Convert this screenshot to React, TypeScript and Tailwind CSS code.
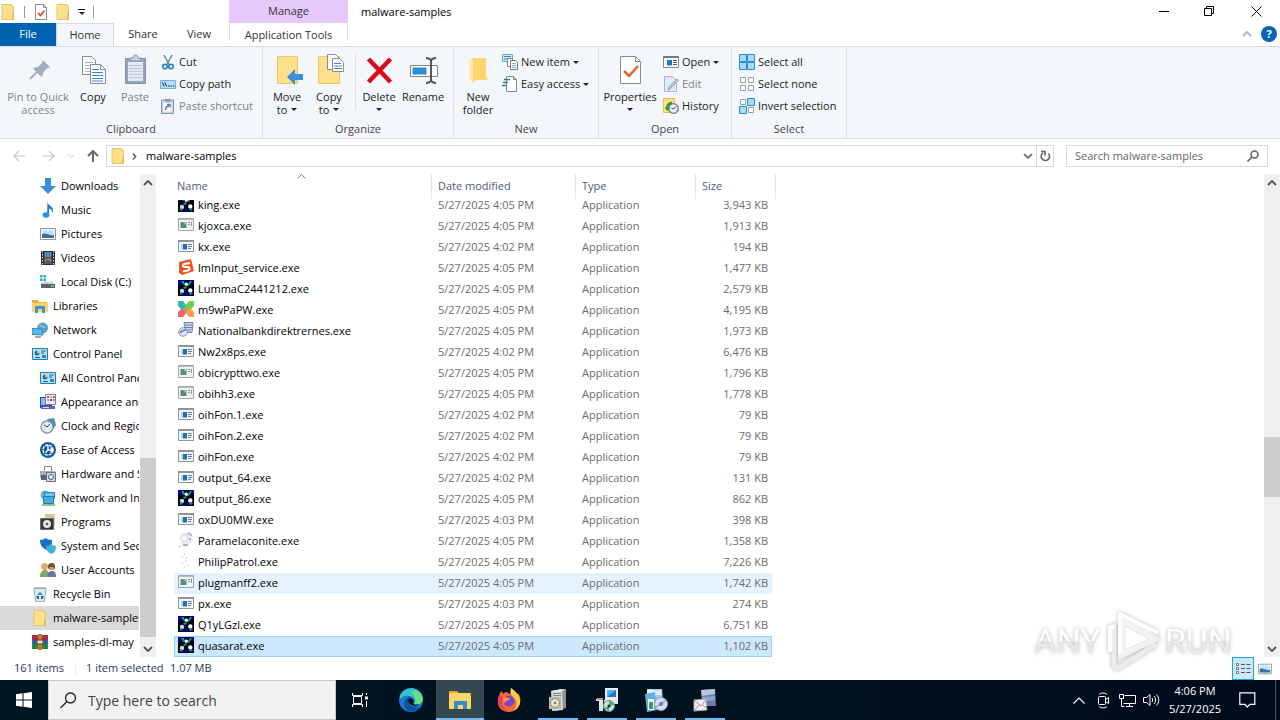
import React from 'react';
import clsx from 'clsx';

type IconProps = { name: string; size?: number };

const glyphs: Record<string, React.ReactNode> = {
  folder: (
    <>
      <path d="M2 .5h10v2h1.500v13H2z" fill="#ffe08a" stroke="#e9c465" />
      <path d="M12 9v6.500h2V9z" fill="#e8bd55" />
    </>
  ),
  check: (
    <>
      <path d="M2.500.5h8l3 3v12h-11z" fill="#fff" stroke="#8a8a8a" />
      <path d="M10.500.5v3h3" fill="none" stroke="#8a8a8a" />
      <path d="M5 9l2.500 2.500L11.500 6.500" fill="none" stroke="#d9532c" strokeWidth="1.800" />
    </>
  ),
  cut: (
    <>
      <path d="M4 1l5 9.500M12 1L7 10.500" stroke="#6f8496" strokeWidth="1.500" fill="none" />
      <circle cx="5" cy="12.500" r="2.300" fill="#d6ecfa" stroke="#2480bd" strokeWidth="1.500" />
      <circle cx="11" cy="12.500" r="2.300" fill="#d6ecfa" stroke="#2480bd" strokeWidth="1.500" />
    </>
  ),
  copyPath: (
    <>
      <path d="M.5 4.500h15v8H.5z" fill="#b9e0fa" stroke="#69b4e4" />
      <path d="M2.500 6.500l1.500 4M5 6.500l1.500 4" stroke="#123" fill="none" />
      <path d="M8 10h1.500M10.500 10H12M13 10h1.500" stroke="#123" />
    </>
  ),
  pasteShortcut: (
    <>
      <path d="M1.500 2h12v13.500h-12z" fill="#c9d3e6" stroke="#8594b5" />
      <path d="M5 .8h5v2.700H5z" fill="#8594b5" />
      <path d="M3.500 5h8v8.500h-8z" fill="#fff" />
      <path d="M5.500 12c0-3 1-4 3.500-4M7 6.500h3v3" fill="none" stroke="#5d78ad" strokeWidth="1.500" />
    </>
  ),
  newItem: (
    <>
      <path d="M.5.500h10v7H.5z" fill="#cde9fb" stroke="#6aa7cf" />
      <path d="M2 2.500h7M2 5h3" stroke="#3a87c0" />
      <path d="M5.500 4.500h5v8h-5z" fill="#fff" stroke="#888" />
      <path d="M8.500 6.500h5l2 2v7h-7z" fill="#fff" stroke="#777" />
      <path d="M10 9.500h4M10 11.500h4M10 13.500h4" stroke="#8aa9c5" />
    </>
  ),
  easyAccess: (
    <>
      <path d="M4.500.5h7l3 3v12h-10z" fill="#fff" stroke="#888" />
      <path d="M11.500.5v3h3" fill="none" stroke="#888" />
      <path d="M2 3.500h6M1 6.500h5M0 9.500h4" stroke="#2c77b0" strokeWidth="1.300" />
    </>
  ),
  open: (
    <>
      <path d="M.5 2.500h15v11H.5z" fill="#fff" stroke="#888" />
      <path d="M.5 3h15" stroke="#777" strokeWidth="2" />
      <path d="M4 6h5v5.500H4z" fill="#1679c5" />
      <path d="M10 6.500h4M10 8.500h4M10 10.500h4" stroke="#456" />
    </>
  ),
  edit: (
    <>
      <path d="M1.500.500h8l4 4v11h-12z" fill="#e4eaf5" stroke="#a9b5ce" />
      <path d="M5 14l1-3 8-8 1.500 1.500-8 8z" fill="#b7c6e2" stroke="#93a5c9" />
    </>
  ),
  history: (
    <>
      <path d="M.5.5h11v14H.5z" fill="#ffe08a" stroke="#e6bf59" />
      <circle cx="10.500" cy="10.500" r="4.800" fill="#e9eef2" stroke="#6c7880" strokeWidth="1.300" />
      <path d="M10.500 11l2.500-2.500M10.500 11l-2-1" fill="none" stroke="#445" />
      <path d="M9 5C5.500 5 4 7.500 4.500 10" fill="none" stroke="#28a028" strokeWidth="2.500" />
      <path d="M1.500 9.500h6L4.500 13z" fill="#28a028" />
    </>
  ),
  selectAll: (
    <path d="M.5.5h7v7h-7zM8.500.5h7v7h-7zM.5 8.500h7v7h-7zM8.500 8.500h7v7h-7z" fill="#a5dbfb" stroke="#2b8ad0" />
  ),
  selectNone: (
    <path d="M1.500 1.500h5v5h-5zM9.500 1.500h5v5h-5zM1.500 9.500h5v5h-5zM9.500 9.500h5v5h-5z" fill="#fff" stroke="#a0a0a0" />
  ),
  invert: (
    <>
      <path d="M1.500 1.500h5v5h-5zM9.500 9.500h5v5h-5z" fill="#fff" stroke="#8fa0ac" />
      <path d="M8.500.5h7v7h-7zM.5 8.500h7v7h-7z" fill="#a5dbfb" stroke="#2b8ad0" />
    </>
  ),
  downloads: <path d="M5 0h6v8h5l-8 8-8-8h5z" fill="#3c8fda" />,
  music: (
    <>
      <path d="M7.500 0c.5 3.500 5.500 4 5.500 8 0 1-.5 2.200-1 3 .3-3-1.500-4-3-4.500V13h-2z" fill="#1e7fd2" />
      <ellipse cx="6" cy="13" rx="3.500" ry="2.700" fill="#2b93e8" />
    </>
  ),
  pictures: (
    <>
      <path d="M.5 2.500h15v11H.5z" fill="#fff" stroke="#8d959c" />
      <path d="M2 4h12v8H2z" fill="#bfe3fa" />
      <path d="M2 8c4-2 7 2 12 1v3H2z" fill="#3b6f94" />
    </>
  ),
  videos: (
    <>
      <path d="M1 1h14v14H1z" fill="#2d2d2d" />
      <path d="M2.500 1v14M13.500 1v14" stroke="#ddd" strokeDasharray="1.500 1.500" />
      <path d="M4.500 2h7v5.500h-7z" fill="#5c80ba" />
      <path d="M4.500 8.500h7V14h-7z" fill="#a78a50" />
      <path d="M4.500 12l3-2.500 4 3V14h-7z" fill="#465d7c" />
    </>
  ),
  disk: (
    <>
      <path d="M0 1h2.500v2.500H0zM3.500 1H6v2.500H3.500zM0 4.500h2.500V7H0zM3.500 4.500H6V7H3.500z" fill="#17b3c9" />
      <path d="M3 7.500h9l3 2.500H1z" fill="#cfd4d6" />
      <path d="M1 10h14v4H1z" fill="#5b6468" />
      <path d="M11 12h3" stroke="#50e36b" strokeWidth="1.500" />
    </>
  ),
  libraries: (
    <>
      <path d="M0 2h6l1 2h8v10H0z" fill="#eab543" />
      <path d="M0 5h16v9H0z" fill="#fbd367" />
      <path d="M3 8h10v7h-3v-4H6v4H3z" fill="#3e96d6" />
    </>
  ),
  network: (
    <>
      <circle cx="10.500" cy="6" r="5.500" fill="#5c9fc2" />
      <path d="M7 3c3 0 3 3 6 2" stroke="#b4dded" fill="none" />
      <path d="M0 6.500l10 .5 1 6-11-.5z" fill="#59b8ec" stroke="#3385b8" />
      <path d="M3 15h6" stroke="#7b8d99" strokeWidth="1.500" />
    </>
  ),
  control: (
    <>
      <path d="M.5 2.500h15v11H.5z" fill="#b5e3fb" stroke="#1d7fb7" />
      <circle cx="5" cy="7" r="2.500" fill="#2470a5" />
      <path d="M5 7V4.500A2.500 2.500 0 017.500 7z" fill="#f5cb61" />
      <path d="M9 5h5M9 7h3M3 11.500h5" stroke="#1f5c87" />
      <path d="M10 9h4v3h-4z" fill="#2f8ec8" />
    </>
  ),
  appearance: (
    <>
      <path d="M0 3h12v11H0z" fill="#3049b8" />
      <path d="M1 4h9v7H1z" fill="#8fb7ee" />
      <path d="M5.500.500h10v10h-10z" fill="#f2f0ff" stroke="#7c7ca0" />
      <path d="M7 2h2v2H7zM13 5h1.500v2H13z" fill="#d44" />
      <path d="M10 2h2v2h-2zM7 5h2v2H7z" fill="#e8a52b" />
      <path d="M13 2h1.500v2H13zM10 5h2v2h-2z" fill="#4355b8" />
      <path d="M1 12h14v3H1z" fill="#5762c4" />
      <path d="M3 13.500h6" stroke="#dfe4ff" />
    </>
  ),
  clock: (
    <>
      <path d="M7 1l7-1 2 7-5 7z" fill="#4d91b9" />
      <circle cx="7" cy="9" r="6" fill="#e4edf3" stroke="#7d96a6" strokeWidth="1.300" />
      <path d="M7 9l3-3M4 7l3 2" stroke="#345" fill="none" />
    </>
  ),
  ease: (
    <>
      <circle cx="8" cy="8" r="8" fill="#165e9c" />
      <circle cx="8" cy="8" r="5" fill="none" stroke="#fff" strokeWidth="1.300" strokeDasharray="3 1" />
      <path d="M8 3v5h5M8 8l-2.500 2.500M10.500 5.500L13 8l-2.500 2.500" stroke="#fff" strokeWidth="1.300" fill="none" />
    </>
  ),
  hardware: (
    <>
      <path d="M4.500.500h7v5h-7z" fill="#fff" stroke="#888" />
      <path d="M0 5h15v7H0z" fill="#a7aeb6" />
      <path d="M1 9h5v5H1z" fill="#5e6475" />
      <path d="M6.500 6.500h9v9h-9z" fill="#d2dae0" stroke="#66717a" />
      <circle cx="11" cy="11" r="2.500" fill="#f4f4f4" stroke="#4c5c68" />
    </>
  ),
  netInternet: (
    <>
      <circle cx="5" cy="5" r="4.500" fill="#63b7dd" />
      <path d="M4.500 2.500h10v6h-10z" fill="#6dc4ef" stroke="#237eae" />
      <path d="M3.500 6.500h10v7h-10z" fill="#4aabdd" stroke="#237eae" />
      <path d="M2 15h13" stroke="#62bd5a" strokeWidth="1.500" />
    </>
  ),
  programs: (
    <>
      <path d="M5 0h10v12H5z" fill="#d9c69b" />
      <path d="M.5 4.500h13v11H.5z" fill="#353535" stroke="#6c6c6c" />
      <circle cx="7" cy="10" r="4" fill="#e4e4e4" />
      <circle cx="7" cy="10" r="1.300" fill="#555" />
    </>
  ),
  security: (
    <>
      <path d="M0 2c3 0 4-1 5-2 2 1 4 2 7 2 0 5-1 8-5 10C2 10 0 7 0 2z" fill="#1672c0" />
      <path d="M6 8c3 0 4-1 5-2 1 1 3 2 5 2 0 4-1 6-4 8-4-1-6-4-6-8z" fill="#43aee0" />
    </>
  ),
  users: (
    <>
      <circle cx="4.500" cy="4.500" r="3.500" fill="#d8b06c" />
      <path d="M0 15c0-5 2-7 5-7s4 2 4 7z" fill="#7aa86d" />
      <circle cx="11.500" cy="4.500" r="3.500" fill="#6e4f37" />
      <path d="M9.500 5h4v3h-4z" fill="#cf9f7a" />
      <path d="M7 15c0-4 2-6 5-6s4 2 4 6z" fill="#65799a" />
    </>
  ),
  recycle: (
    <>
      <path d="M2 2.500h12l-1.500 13h-9z" fill="#e3ebf0" stroke="#a0abb2" />
      <path d="M1.500 2h13" stroke="#8c989f" />
      <path d="M5 9l3-3 3 3h-2l-1-1-1 1zM5 13l-1-3h3v3zM11 13l1-3H9v3z" fill="#1e79c4" />
    </>
  ),
  winrar: (
    <>
      <path d="M0 1h16v5H0z" fill="#b0304c" />
      <path d="M0 6h16v4H0z" fill="#3a62b8" />
      <path d="M0 10h16v5H0z" fill="#2f8c42" />
      <path d="M6 0h4v16H6z" fill="#b67a34" />
      <path d="M5 6h6v4H5z" fill="#e9e2c8" stroke="#6a4321" />
      <path d="M2.500 1v14M13.500 1v14" stroke="#222" strokeOpacity=".35" />
    </>
  ),
  exe: (
    <>
      <path d="M.5 2.500h15v11H.5z" fill="#f7f9fa" stroke="#8f9498" />
      <path d="M0 3h16" stroke="#8f9498" strokeWidth="2" />
      <path d="M5 6h4v5.500H5z" fill="#1d70b8" />
      <path d="M3 6h2v5.500H3z" fill="#b5d6ee" />
      <path d="M10 6.500h4M10 8.500h4M10 10.500h3" stroke="#5b7f9c" />
    </>
  ),
  exeOld: (
    <>
      <path d="M.5 1.500h15v12H.5z" fill="#f3f5f5" stroke="#a0a5a8" />
      <path d="M1 2.500h14" stroke="#b9bec2" />
      <path d="M2.500 5h6v6h-6z" fill="#598c7e" />
      <path d="M5 5h3.500v3.500z" fill="#a2c6bd" />
      <path d="M10 5.500h2M10 7.500h2M13.500 5v4" stroke="#8a9290" />
    </>
  ),
  crystal: (
    <>
      <path d="M0 0h16v16H0z" fill="#00004f" />
      <path d="M0 0h3v5H0zM13 0h3v6h-3zM5 12h5v4H5z" fill="#0000a8" />
      <path d="M3 1h5v6L4 9 0 12V7l3-2zM10 1h3l3 4v2l-5 1-3-2zM8 9l4-1 4 2v5l-4 1-4-4zM0 12l3-3 4 1v4l-4 2H0z" fill="#000" />
      <path d="M3 1h3l1 3-2 1zM12 1h2l-3 5-2-1z" fill="#1494a0" />
      <circle cx="8.300" cy="4.300" r="1.700" fill="#e8ffff" />
      <circle cx="4" cy="11" r="2.200" fill="#c8dcdc" />
      <circle cx="12.300" cy="10.500" r="2.200" fill="#fff" />
      <path d="M1 14l3-2 1 2-2 1zM11 13l3-1 1 2-3 1zM5 7l3-1 1 2-3 1z" fill="#17867f" />
    </>
  ),
  sogou: (
    <>
      <path d="M1 3l12-3 3 12-12 4-3-2z" fill="#f1501f" />
      <path d="M12 4L6 5c-2 1-1 3 1 3l3 .2c2 .3 2 2.600 0 3.300L5 12.500" fill="none" stroke="#fff" strokeWidth="2.200" />
    </>
  ),
  clover: (
    <>
      <path d="M0 0h5l3 4v4H3L0 5z" fill="#31b7b4" />
      <path d="M11 0h5v5l-3 3H8V4z" fill="#6fd34a" />
      <path d="M0 11l3-3h5v4l-3 4H0z" fill="#f66471" />
      <path d="M8 8h5l3 3v5h-5l-3-4z" fill="#fba043" />
      <path d="M8 5l3 3-3 3-3-3z" fill="#b8a168" />
    </>
  ),
  database: (
    <>
      <path d="M6 .5h9l-1 10H7z" fill="#ccd5ea" stroke="#7583aa" />
      <path d="M7 3h7M7 5.500h7M7 8h6" stroke="#6c7fb5" />
      <circle cx="5" cy="10" r="4.300" fill="#dfe5f4" stroke="#8e9ac0" />
      <path d="M2 11c2-3 4-3 6-3" fill="none" stroke="#6980bb" strokeWidth="1.500" />
    </>
  ),
  disc: (
    <>
      <path d="M5 1l7-1 3 3-1 8-6 4-5-2 1-5z" fill="#e9ecf0" />
      <circle cx="6" cy="6" r="3.500" fill="#f5f7f9" stroke="#ccd3da" />
      <path d="M9 2l3-1M11 7h2M5 13h5" stroke="#8fa2b6" strokeWidth="1.300" />
      <path d="M12 3h1.500" stroke="#3d6287" />
      <path d="M1 14h1v1H1z" fill="#777" />
    </>
  ),
  dots: <path d="M6 1h1M4 4h1M8 5h1M7 8h1M4 10h1M9 12h1M6 14h1" stroke="#b5b5b5" />,
  viewDetails: (
    <>
      <path d="M1.500 2.500h2v2h-2zM1.500 6.500h2v2h-2zM1.500 10.500h2v2h-2z" fill="#fff" stroke="#777" />
      <path d="M6 3.500h4M11.500 3.500h4M6 7.500h4M11.500 7.500h4M6 11.500h4M11.500 11.500h4" stroke="#555" />
    </>
  ),
};

const Icon = ({ name, size = 16 }: IconProps) => (
  <svg width={size} height={size} viewBox="0 0 16 16" className="shrink-0" aria-hidden="true">
    {glyphs[name]}
  </svg>
);

const bigGlyphs: Record<string, React.ReactNode> = {
  pin: (
    <>
      <path d="M21 6l7 7-2 1-1 .5-4 4c0 2 0 3-1.500 4.500L11 14.500c1.500-1.500 3-1.500 5-1.500l4-4z" fill="#a4adbb" />
      <path d="M15 18l-7 7" stroke="#a4adbb" strokeWidth="2" />
    </>
  ),
  copy: (
    <>
      <path d="M5.500 2.500h9l4 4v14h-13z" fill="#fff" stroke="#8b8b8b" />
      <path d="M8 8.500h8M8 11.500h8M8 14.500h8M8 17.500h8" stroke="#8fb8e4" />
      <path d="M13.500 10.500h10l5 5v14h-15z" fill="#fff" stroke="#8b8b8b" />
      <path d="M23.500 10.500v5h5" fill="none" stroke="#8b8b8b" />
      <path d="M15 15.500h7M15 18.500h11M15 21.500h11M15 24.500h11M15 27h11" stroke="#3f86d0" />
    </>
  ),
  paste: (
    <>
      <path d="M6.500 4.500h20v25h-20z" fill="#98a3bd" stroke="#8390ad" />
      <path d="M9 8h15v19H9z" fill="#e3e9f5" />
      <path d="M10 11.500h13M10 14.500h13M10 17.500h13M10 20.500h13M10 23.500h13" stroke="#bcc7dd" />
      <path d="M11 7V4h3c0-4 5-4 5 0h3v3z" fill="#c8cfde" stroke="#8390ad" />
    </>
  ),
  moveTo: (
    <>
      <path d="M6.500 2.500h20v27h-20z" fill="#fee08b" stroke="#ecc766" />
      <path d="M32 20v6h-8v5l-8-8 8-8v5z" fill="#3b8fd8" />
    </>
  ),
  copyTo: (
    <>
      <path d="M5.500 2.500h21v27h-21z" fill="#fee08b" stroke="#ecc766" />
      <path d="M14.500.5h8l4 4v11h-12z" fill="#fff" stroke="#8b8b8b" />
      <path d="M19.500 4.500h7l4 4v9h-11z" fill="#fff" stroke="#8b8b8b" />
      <path d="M21 9.500h7M21 12h8M21 14.500h8" stroke="#3f86d0" />
    </>
  ),
  del: <path d="M5.500 5l22 23M27.500 5l-22 23" stroke="#d90a1e" strokeWidth="4.500" fill="none" />,
  rename: (
    <>
      <path d="M3.500 11.500h27v11h-27z" fill="#fff" stroke="#858585" />
      <path d="M5.500 13.500h14v7h-14z" fill="#2e8fd9" />
      <path d="M19 4c3 0 4 1 5 2 1-1 2-2 5-2M19 29c3 0 4-1 5-2 1 1 2 2 5 2M24 6v21" fill="none" stroke="#555" strokeWidth="2" />
    </>
  ),
  newFolder: (
    <>
      <path d="M7 5h16v21H7z" fill="#ffe9a6" />
      <path d="M10 4h14v17l2 5H14l-4 3z" fill="#fbd571" />
      <path d="M7 5l4 1v23l-4-4z" fill="#ffe6b3" />
    </>
  ),
  properties: (
    <>
      <path d="M6.500 2.500h15l5 5v22h-20z" fill="#fff" stroke="#8b8b8b" />
      <path d="M21.500 2.500v5h5" fill="none" stroke="#8b8b8b" />
      <path d="M10 17l5 5 9-10" fill="none" stroke="#e8622b" strokeWidth="2.500" />
    </>
  ),
};

const Caret = () => (
  <svg width="6" height="3" viewBox="0 0 6 3" className="inline-block shrink-0" aria-hidden="true">
    <path d="M0 0h6L3 3z" fill="#222" />
  </svg>
);

type BigProps = { icon: string; lines: string[]; width: string; caret?: boolean; disabled?: boolean };

const BigButton = ({ icon, lines, width, caret, disabled }: BigProps) => (
  <button
    disabled={disabled}
    className={clsx('flex shrink-0 flex-col items-center pt-1 leading-[13px]', width, disabled && 'text-[#7d8187]')}
  >
    <svg width="32" height="32" viewBox="0 0 32 32" className="mb-1 shrink-0" aria-hidden="true">
      {bigGlyphs[icon]}
    </svg>
    <span className="whitespace-nowrap">{lines[0]}</span>
    <span className="flex h-[13px] items-center gap-1 whitespace-nowrap">
      {lines[1]}
      {caret && <Caret />}
    </span>
  </button>
);

type SmallProps = { icon: string; label: string; caret?: boolean; disabled?: boolean };

const SmallButton = ({ icon, label, caret, disabled }: SmallProps) => (
  <button
    disabled={disabled}
    className={clsx('flex h-[22px] items-center gap-[3px] whitespace-nowrap', disabled && 'text-[#7d8187]')}
  >
    <Icon name={icon} />
    <span>{label}</span>
    {caret && <Caret />}
  </button>
);

const Group = ({ label, width, children }: { label: string; width: string; children: React.ReactNode }) => (
  <section aria-label={label} className={clsx('flex shrink-0 flex-col border-r border-[#dfe1e4] pt-[3px]', width)}>
    <div className="flex h-[70px]">{children}</div>
    <div className="pt-px text-center leading-4 text-[#444]">{label}</div>
  </section>
);

const Chevron = ({ dir, color = '#555' }: { dir: 'up' | 'down'; color?: string }) => (
  <svg width="10" height="6" viewBox="0 0 10 6" aria-hidden="true">
    <path d={dir === 'up' ? 'M1 5l4-4 4 4' : 'M1 1l4 4 4-4'} fill="none" stroke={color} strokeWidth="1.800" />
  </svg>
);

const ScrollBar = ({ before, thumb }: { before: string; thumb: string }) => (
  <div className="flex w-4 shrink-0 flex-col bg-[#f0f0f0]">
    <button aria-label="Scroll up" className="flex h-[18px] items-center justify-center">
      <Chevron dir="up" />
    </button>
    <div className="flex grow flex-col">
      <div className={before} />
      <div className={clsx('bg-[#cdcdcd]', thumb)} />
    </div>
    <button aria-label="Scroll down" className="flex h-[17px] items-center justify-center">
      <Chevron dir="down" />
    </button>
  </div>
);

const places = [
  { icon: 'downloads', label: 'Downloads', deep: true },
  { icon: 'music', label: 'Music', deep: true },
  { icon: 'pictures', label: 'Pictures', deep: true },
  { icon: 'videos', label: 'Videos', deep: true },
  { icon: 'disk', label: 'Local Disk (C:)', deep: true },
  { icon: 'libraries', label: 'Libraries' },
  { icon: 'network', label: 'Network' },
  { icon: 'control', label: 'Control Panel' },
  { icon: 'control', label: 'All Control Panel Items', deep: true },
  { icon: 'appearance', label: 'Appearance and Personalization', deep: true },
  { icon: 'clock', label: 'Clock and Region', deep: true },
  { icon: 'ease', label: 'Ease of Access', deep: true },
  { icon: 'hardware', label: 'Hardware and Sound', deep: true },
  { icon: 'netInternet', label: 'Network and Internet', deep: true },
  { icon: 'programs', label: 'Programs', deep: true },
  { icon: 'security', label: 'System and Security', deep: true },
  { icon: 'users', label: 'User Accounts', deep: true },
  { icon: 'recycle', label: 'Recycle Bin' },
  { icon: 'folder', label: 'malware-samples', active: true },
  { icon: 'winrar', label: 'samples-dl-may' },
];

const files = [
  ['crystal', 'king.exe', '4:05', '3,943'],
  ['exeOld', 'kjoxca.exe', '4:05', '1,913'],
  ['exe', 'kx.exe', '4:02', '194'],
  ['sogou', 'lmInput_service.exe', '4:05', '1,477'],
  ['crystal', 'LummaC2441212.exe', '4:05', '2,579'],
  ['clover', 'm9wPaPW.exe', '4:05', '4,195'],
  ['database', 'Nationalbankdirektrernes.exe', '4:05', '1,973'],
  ['exe', 'Nw2x8ps.exe', '4:02', '6,476'],
  ['exeOld', 'obicrypttwo.exe', '4:05', '1,796'],
  ['exeOld', 'obihh3.exe', '4:05', '1,778'],
  ['exe', 'oihFon.1.exe', '4:02', '79'],
  ['exe', 'oihFon.2.exe', '4:02', '79'],
  ['exe', 'oihFon.exe', '4:02', '79'],
  ['exe', 'output_64.exe', '4:02', '131'],
  ['crystal', 'output_86.exe', '4:05', '862'],
  ['exe', 'oxDU0MW.exe', '4:03', '398'],
  ['disc', 'Paramelaconite.exe', '4:05', '1,358'],
  ['dots', 'PhilipPatrol.exe', '4:05', '7,226'],
  ['exeOld', 'plugmanff2.exe', '4:05', '1,742'],
  ['exe', 'px.exe', '4:03', '274'],
  ['crystal', 'Q1yLGzl.exe', '4:05', '6,751'],
  ['crystal', 'quasarat.exe', '4:05', '1,102'],
];

const TitleBar = () => (
  <header className="flex h-[46px] shrink-0">
    <div className="flex w-[229px] flex-col">
      <div className="flex h-[23px] items-center">
        <Icon name="folder" />
        <span className="mx-2 h-3 w-px bg-[#999]" />
        <Icon name="check" />
        <span className="ml-[6px] flex">
          <Icon name="folder" />
        </span>
        <button aria-label="Customize Quick Access Toolbar" className="ml-[7px] flex flex-col items-center gap-[2px]">
          <span className="h-px w-[7px] bg-black" />
          <Caret />
        </button>
        <span className="ml-2 h-3 w-px bg-[#999]" />
      </div>
      <nav className="flex h-[23px] items-stretch text-[#333]">
        <button className="w-14 bg-[#0063b1] text-white">File</button>
        <button className="-mb-px w-[58px] border border-b-0 border-[#dadbdc] bg-[#f4f7fa]">Home</button>
        <button className="w-[58px]">Share</button>
        <button className="w-[54px]">View</button>
      </nav>
    </div>
    <div className="flex w-[119px] flex-col text-center text-[#333]">
      <div className="h-[23px] bg-[#e8c9fd] leading-[21px]">Manage</div>
      <button className="h-[18px] border-x border-[#dedede] pt-[5px] leading-[13px]">Application Tools</button>
    </div>
    <h1 className="ml-[13px] grow leading-6">malware-samples</h1>
    <div className="flex flex-col">
      <div className="flex h-[22px] items-center">
        <button aria-label="Minimize" className="flex w-[45px] justify-center">
          <span className="h-px w-[10px] bg-black" />
        </button>
        <button aria-label="Restore" className="flex w-[46px] justify-center">
          <svg width="10" height="10" viewBox="0 0 10 10" fill="none" stroke="#000">
            <path d="M.5 2.500h7v7h-7zM2.500 2.500v-2h7v7h-2" />
          </svg>
        </button>
        <button aria-label="Close" className="flex w-[48px] justify-center">
          <svg width="11" height="11" viewBox="0 0 11 11" stroke="#000">
            <path d="M.5.5l10 10M10.500.5l-10 10" />
          </svg>
        </button>
      </div>
      <div className="flex h-6 items-center justify-end gap-[9px] pr-[3px]">
        <Chevron dir="up" color="#b5b5b5" />
        <button aria-label="Help" className="h-4 w-4 rounded-full bg-[#0b64b5] text-[11px] leading-4 font-bold text-white">
          ?
        </button>
      </div>
    </div>
  </header>
);

const Ribbon = () => (
  <div className="flex h-[93px] shrink-0 border-y border-[#dadbdc] bg-[#f4f7fa] text-[#222]">
    <Group label="Clipboard" width="w-[263px]">
      <div className="w-[3px]" />
      <BigButton icon="pin" lines={['Pin to Quick', 'access']} width="w-[70px]" disabled />
      <BigButton icon="copy" lines={['Copy']} width="w-[40px]" />
      <BigButton icon="paste" lines={['Paste']} width="w-[44px]" disabled />
      <div className="pt-px pl-[3px]">
        <SmallButton icon="cut" label="Cut" />
        <SmallButton icon="copyPath" label="Copy path" />
        <SmallButton icon="pasteShortcut" label="Paste shortcut" disabled />
      </div>
    </Group>
    <Group label="Organize" width="w-[191px]">
      <div className="w-[2px]" />
      <BigButton icon="moveTo" lines={['Move', 'to']} width="w-[44px]" caret />
      <BigButton icon="copyTo" lines={['Copy', 'to']} width="w-[40px]" caret />
      <div className="mt-1 mr-0.5 ml-1.5 h-14 w-px bg-[#dfe1e4]" />
      <BigButton icon="del" lines={['Delete', '']} width="w-[42px]" caret />
      <BigButton icon="rename" lines={['Rename']} width="w-[46px]" />
    </Group>
    <Group label="New" width="w-[145px]">
      <div className="w-[3px]" />
      <BigButton icon="newFolder" lines={['New', 'folder']} width="w-[42px]" />
      <div className="pt-px pl-[3px]">
        <SmallButton icon="newItem" label="New item" caret />
        <SmallButton icon="easyAccess" label="Easy access" caret />
      </div>
    </Group>
    <Group label="Open" width="w-[133px]">
      <div className="w-[3px]" />
      <BigButton icon="properties" lines={['Properties', '']} width="w-[56px]" caret />
      <div className="pt-px pl-[5px]">
        <SmallButton icon="open" label="Open" caret />
        <SmallButton icon="edit" label="Edit" disabled />
        <SmallButton icon="history" label="History" />
      </div>
    </Group>
    <Group label="Select" width="w-[115px]">
      <div className="pt-px pl-[7px]">
        <SmallButton icon="selectAll" label="Select all" />
        <SmallButton icon="selectNone" label="Select none" />
        <SmallButton icon="invert" label="Invert selection" />
      </div>
    </Group>
  </div>
);

const arrowPaths = {
  back: 'M12 6H1M6 1L1 6l5 5',
  forward: 'M0 6h11M6 1l5 5-5 5',
  up: 'M6 12V1M1 6l5-5 5 5',
};

const Arrow = ({ dir, color }: { dir: keyof typeof arrowPaths; color: string }) => (
  <svg width="12" height="12" viewBox="0 0 12 12" fill="none" stroke={color} strokeWidth={dir === 'up' ? 2 : 1.2}>
    <path d={arrowPaths[dir]} />
  </svg>
);

const AddressBar = () => (
  <div className="flex h-[35px] shrink-0 items-center pr-3 pb-px pl-[13px]">
    <button aria-label="Back">
      <Arrow dir="back" color="#c9c9c9" />
    </button>
    <button aria-label="Forward" className="ml-[18px]">
      <Arrow dir="forward" color="#c9c9c9" />
    </button>
    <button aria-label="Recent locations" className="ml-[13px]">
      <svg width="7" height="5" viewBox="0 0 7 5" fill="none" stroke="#ccc">
        <path d="M.5.5l3 3 3-3" />
      </svg>
    </button>
    <button aria-label="Up" className="ml-3">
      <Arrow dir="up" color="#6a6a6a" />
    </button>
    <div className="ml-[7px] flex h-[22px] grow items-center border border-[#d9d9d9] pl-[3px]">
      <Icon name="folder" />
      <svg width="5" height="7" viewBox="0 0 5 7" fill="none" stroke="#555" strokeWidth="1.300" className="ml-[6px]">
        <path d="M.8.5l3 3-3 3" />
      </svg>
      <button className="ml-[9px] text-black">malware-samples</button>
      <button aria-label="Previous locations" className="mr-[3px] ml-auto">
        <Chevron dir="down" color="#777" />
      </button>
      <button aria-label="Refresh" className="flex h-full w-[17px] items-center justify-center border-l border-[#d9d9d9]">
        <svg width="11" height="12" viewBox="0 0 11 12" fill="none" stroke="#666" strokeWidth="1.600">
          <path d="M3 2.800a4.200 4.200 0 105.500.7M1 1.500h4v4" />
        </svg>
      </button>
    </div>
    <div className="ml-3 flex h-[22px] w-[202px] items-center border border-[#d9d9d9] pr-2 pl-2">
      <input
        aria-label="Search malware-samples"
        placeholder="Search malware-samples"
        className="w-0 grow outline-none placeholder:text-[#666]"
      />
      <svg width="12" height="12" viewBox="0 0 12 12" fill="none" stroke="#666" strokeWidth="1.600">
        <circle cx="7.500" cy="4.500" r="3.500" />
        <path d="M5 7l-4.500 4.500" />
      </svg>
    </div>
  </div>
);

const Sidebar = () => (
  <nav className="flex w-[156px] shrink-0">
    <ul className="mr-px w-[139px] overflow-hidden">
      {places.map((p) => (
        <li key={p.label} className={clsx(p.active && 'bg-[#d9d9d9]')}>
          <a href="#" className={clsx('flex h-6 items-center gap-[5px] whitespace-nowrap', p.deep ? 'pl-10' : 'pl-8')}>
            <Icon name={p.icon} />
            {p.label}
          </a>
        </li>
      ))}
    </ul>
    <ScrollBar before="h-[266px]" thumb="h-[179px]" />
  </nav>
);

const FileList = () => (
  <main className="grow overflow-hidden pl-[18px]">
    <table className="w-[602px] table-fixed border-separate border-spacing-0 text-[#6d6d6d]">
      <colgroup>
        <col className="w-[258px]" />
        <col className="w-[144px]" />
        <col className="w-[120px]" />
        <col className="w-[76px]" />
        <col className="w-[4px]" />
      </colgroup>
      <thead>
        <tr className="text-left text-[#4c607a]">
          <th className="relative h-[25px] border-r border-[#e5e5e5] p-0 pl-[3px] font-normal">
            <span className="absolute top-0 left-[123px]">
              <svg width="9" height="5" viewBox="0 0 9 5" fill="none" stroke="#888">
                <path d="M.5 4.500l4-4 4 4" />
              </svg>
            </span>
            Name
          </th>
          <th className="border-r border-[#e5e5e5] p-0 pl-[6px] font-normal">Date modified</th>
          <th className="border-r border-[#e5e5e5] p-0 pl-[6px] font-normal">Type</th>
          <th colSpan={2} className="border-r border-[#e5e5e5] p-0 pl-[6px] font-normal">
            Size
          </th>
        </tr>
      </thead>
      <tbody>
        {files.map(([icon, name, time, size], i) => {
          const selected = name === 'quasarat.exe';
          const hovered = name === 'plugmanff2.exe';
          // the first row is scrolled partly under the header
          const clip = clsx('flex flex-col justify-end overflow-hidden', i === 0 ? 'h-[15px]' : 'h-[19px]');
          const line = 'flex h-[19px] shrink-0 items-center';
          const cell = clsx(
            'border-y p-0',
            selected ? 'border-[#99d1ff] bg-[#cce8ff]' : 'border-transparent',
            hovered && 'bg-[#e5f3ff]'
          );
          return (
            <tr key={name}>
              <td className={clsx(cell, 'border-l')}>
                <div className={clip}>
                  <div className={clsx(line, 'gap-1 pl-[3px] text-black')}>
                    <span className="self-start">
                      <Icon name={icon} />
                    </span>
                    {name}
                  </div>
                </div>
              </td>
              <td className={cell}>
                <div className={clip}>
                  <div className={clsx(line, 'pl-[6px]')}>5/27/2025 {time} PM</div>
                </div>
              </td>
              <td className={cell}>
                <div className={clip}>
                  <div className={clsx(line, 'pl-[6px]')}>Application</div>
                </div>
              </td>
              <td className={clsx(cell, 'border-r')}>
                <div className={clip}>
                  <div className={clsx(line, 'justify-end pr-[3px]')}>{size} KB</div>
                </div>
              </td>
              <td className="p-0" />
            </tr>
          );
        })}
      </tbody>
    </table>
  </main>
);

const Watermark = () => (
  <div className="pointer-events-none absolute right-12 bottom-12 flex items-center gap-1 font-[Roboto,'Liberation_Sans',sans-serif] text-[34px] leading-[62px] drop-shadow-[0_0_2px_#b5b5b5]">
    <span className="bg-linear-to-b from-white from-50% to-[#e9e9e9] to-50% bg-clip-text text-transparent">ANY</span>
    <svg width="56" height="62" viewBox="0 0 56 62" fill="none" strokeLinejoin="round">
      <path d="M9 14v42l4 2 38-24" stroke="#ececec" strokeWidth="5" />
      <path d="M5 42V17h4" stroke="#fff" strokeWidth="4" />
      <path d="M15 4v43l38-18z" fill="#f3f3f3" stroke="#f1f1f1" strokeWidth="4" />
      <path d="M15 44V4l38 19" stroke="#fff" strokeWidth="4" />
      <path d="M20 16v24l24-11z" fill="#fff" stroke="#e4e4e4" />
    </svg>
    <span className="bg-linear-to-b from-white from-50% to-[#e9e9e9] to-50% bg-clip-text text-transparent">RUN</span>
  </div>
);

const StatusBar = () => (
  <footer className="flex h-[23px] shrink-0 items-center pl-[14px] text-[#1e395b]">
    <span className="w-[61px]">161 items</span>
    <span className="h-3 w-px bg-[#eee]" />
    <span className="ml-[10px] w-[84px]">1 item selected</span>
    <span>1.07 MB</span>
    <button
      aria-label="Details view"
      className="relative z-10 ml-auto flex h-[23px] w-[22px] items-center justify-center border border-[#26a0da] bg-[#cbe8f6]"
    >
      <Icon name="viewDetails" />
    </button>
    <button aria-label="Large icons view" className="mr-2 ml-1">
      <Icon name="pictures" size={14} />
    </button>
  </footer>
);

const tasks: { label: string; active?: boolean; running?: boolean; art: React.ReactNode }[] = [
  {
    label: 'Microsoft Edge',
    art: (
      <>
        <circle cx="12" cy="12" r="12" fill="#1479cf" />
        <path d="M1 8C4-1 18-3 23 7c3 7-3 11-8 9 2-2 1-7-4-8-4-1-8 0-10 3z" fill="#36c4d0" />
        <path d="M16 2c6 2 9 8 7 12-2 3-6 3-8 2 3-5 1-9-3-11z" fill="#6ade77" />
        <path d="M10 12c-1 5 4 9 11 7-3 4-8 5-11 4-5-2-6-8-3-12 1-1 3-2 5-2-1 1-2 2-2 3z" fill="#0b4f96" />
        <path d="M11 10c3 0 5 4 3 6 2 1 4 1 6 0-2 3-7 2-9 0s-2-5 0-6z" fill="#021320" />
      </>
    ),
  },
  {
    label: 'File Explorer',
    active: true,
    art: (
      <>
        <path d="M1 3h8l2 2h12v14H1z" fill="#e3a52e" />
        <path d="M1 8h22v13H1z" fill="#fdd36b" />
        <path d="M1 5h21v6H1z" fill="#fbd46f" />
        <path d="M6 13h13v8h-4v-4h-5v4H6z" fill="#2f8dd0" />
      </>
    ),
  },
  {
    label: 'Firefox',
    art: (
      <>
        <path d="M12 24C5 24 0 19 1 12c0-4 2-6 3-9 1 1 2 2 2 3 1-1 2-2 4-2l2 2c1 0 2-2 2-6 3 2 5 4 6 7l1-2c2 3 3 6 2 10-1 5-5 9-11 9z" fill="#fb6a31" />
        <path d="M14 0c4 3 9 7 9 13 0 5-3 8-6 9 4-5 3-10-1-13-2-2-3-5-2-9z" fill="#ffcd3e" />
        <path d="M1 12c0 7 5 11 11 11-4-1-7-4-7-8 0-2 1-4 3-5-2-1-4-1-4-4-2 1-3 4-3 6z" fill="#ef3c5b" />
        <circle cx="12" cy="13" r="5.500" fill="#7b45cc" />
        <path d="M6 10c3-2 5 1 7 0 0 3-5 2-5 5-2-1-2-3-2-5z" fill="#ff9a35" />
      </>
    ),
  },
  {
    label: 'Storage',
    running: true,
    art: (
      <>
        <path d="M7 3l13-2v19l-10 3z" fill="#8d9497" />
        <path d="M5 3l11-2 1 21-11 1z" fill="#d6d8d5" />
        <path d="M5 3l11-2 4 1-10 2z" fill="#eceeed" />
        <path d="M7 5.500h8M7 7.500h8" stroke="#7f8485" />
        <path d="M3 9h12v12H3z" fill="#bdb9a5" />
        <circle cx="9" cy="15" r="4.500" fill="#e5e2ce" stroke="#8f8d7b" />
        <circle cx="9" cy="15" r="1.200" fill="#6d786a" />
      </>
    ),
  },
  {
    label: 'Setup',
    running: true,
    art: (
      <>
        <path d="M10 0h13v12H10z" fill="#e8edf1" />
        <path d="M12 2h9v7h-9z" fill="#2276bd" />
        <path d="M12 2h9l-9 7z" fill="#4eb3e9" />
        <path d="M1 11l7-1v13H4V13H1zM9 12h14v4H9z" fill="#e4e4dc" />
        <path d="M2 10h6v2H2z" fill="#a69f8a" />
        <circle cx="14" cy="18" r="5.500" fill="#cfe2da" stroke="#788" />
        <path d="M14 13c2 0 4 2 5 4l-5 1zM9 20l5-2v5z" fill="#48a878" />
        <circle cx="14" cy="18" r="1.500" fill="#123" />
      </>
    ),
  },
  {
    label: 'Installer',
    running: true,
    art: (
      <>
        <path d="M3 1h15l2 21H4z" fill="#a7c8e8" />
        <path d="M3 2c5-3 8 3 14 0v5H3z" fill="#e7f1f8" />
        <path d="M1 6l10-2 2 18-10 2z" fill="#68aee0" />
        <path d="M4 11h6v11H4z" fill="#effaf1" />
        <path d="M5 14h4v7H5z" fill="#3a9e56" />
        <circle cx="17" cy="16" r="6.500" fill="#d7e0f3" stroke="#8c9abc" />
        <path d="M17 16l5-4M17 16l-5 3" stroke="#b3a2dc" strokeWidth="2" />
        <circle cx="17" cy="16" r="2" fill="#607aae" />
      </>
    ),
  },
  {
    label: 'Mail server',
    running: true,
    art: (
      <>
        <path d="M8 2l14-1 1 17H9z" fill="#687da7" />
        <path d="M8 2l14-1v5L9 8z" fill="#b7c5df" />
        <path d="M9 9l13-1v4l-13 2z" fill="#8ba3ce" />
        <path d="M1 12l12-1 1 11-13 1z" fill="#f1eff2" stroke="#a6a2ab" />
        <path d="M2 13l6 5 5-6M2 22l4-5M14 21l-4-4" fill="none" stroke="#b98a8d" />
      </>
    ),
  },
];

const Taskbar = () => (
  <div className="flex h-10 shrink-0 items-stretch bg-linear-to-r from-[#001722] to-[#000b1d] text-white">
    <button aria-label="Start" className="flex w-12 items-center justify-center">
      <svg width="16" height="16" viewBox="0 0 16 16" fill="#fff">
        <path d="M0 2.200L6.500 1.300V7.500H0zM7.500 1.200L16 0V7.500H7.500zM0 8.500h6.500v6.200L0 13.800zM7.500 8.500H16V16l-8.500-1.200z" />
      </svg>
    </button>
    <label className="flex w-72 items-center border border-[#c8c8c8] bg-[#f2f2f2] pl-[11px] text-[#333]">
      <svg width="17" height="17" viewBox="0 0 17 17" fill="none" stroke="#222" strokeWidth="1.300">
        <circle cx="10.500" cy="6" r="5" />
        <path d="M7 9.500L.5 16" />
      </svg>
      <input
        aria-label="Type here to search"
        placeholder="Type here to search"
        className="ml-[11px] w-0 grow text-[14px] outline-none placeholder:text-[#444]"
      />
    </label>
    <button aria-label="Task View" className="flex w-12 items-center justify-center">
      <svg width="17" height="16" viewBox="0 0 17 16" fill="none" stroke="#fff">
        <path d="M.5 1v2.500h10V1M.5 15v-2.500h10V15M1.500 4.500h8v7h-8zM14.500 1v2M14.500 9v6" />
        <path d="M13 4.500h3v3h-3z" fill="#fff" stroke="none" />
      </svg>
    </button>
    <div className="ml-[3px] flex gap-px">
      {tasks.map((t) => (
        <button
          key={t.label}
          aria-label={t.label}
          className={clsx('flex w-12 flex-col items-center justify-between', t.active && 'bg-[#33484f]')}
        >
          <span className="flex grow items-center">
            <svg width="24" height="24" viewBox="0 0 24 24" aria-hidden="true">
              {t.art}
            </svg>
          </span>
          <span className={clsx('-mt-[2px] h-[2px]', t.active && 'w-12 bg-[#76b9ed]', t.running && 'w-10 bg-[#76b9ed]')} />
        </button>
      ))}
    </div>
    <div className="ml-auto flex items-center">
      <button aria-label="Show hidden icons" className="flex w-6 justify-center">
        <svg width="12" height="7" viewBox="0 0 12 7" fill="none" stroke="#fff" strokeWidth="1.200">
          <path d="M.5 6.500L6 1l5.500 5.500" />
        </svg>
      </button>
      <button aria-label="Meet now" className="flex w-6 justify-center">
        <svg width="14" height="17" viewBox="0 0 14 17" fill="none" stroke="#fff">
          <rect x="2.500" y="4.500" width="7" height="8" rx="1" />
          <path d="M9.500 7.500l3-2v6l-3-2M3 2.500c2-2 6-2 8 0M3 14.500c2 2 6 2 8 0" />
        </svg>
      </button>
      <button aria-label="Network" className="flex w-6 justify-center">
        <svg width="17" height="15" viewBox="0 0 17 15" fill="none" stroke="#fff">
          <path d="M5.500 2.500h11v8H4.500M.5 1.500h4v4h-4zM2.500 5.500v8h3M10.500 10.500v3M7 13.500h7" />
        </svg>
      </button>
      <button aria-label="Volume" className="flex w-6 justify-center">
        <svg width="17" height="14" viewBox="0 0 17 14" fill="none" stroke="#fff">
          <path d="M.5 4.500h3l3.500-3v11L3.500 9.500h-3zM9 5c1 1 1 3 0 4M11 3c2 2 2 6 0 8M13.500 1.500c3 3 3 8 0 11" />
        </svg>
      </button>
      <div className="w-16 text-center leading-[18px]">
        <div>4:06 PM</div>
        <div>5/27/2025</div>
      </div>
      <button aria-label="Notifications" className="flex w-10 justify-center">
        <svg width="17" height="16" viewBox="0 0 17 16" fill="none" stroke="#fff" strokeWidth="1.200">
          <path d="M.8.8h15v11.500h-5L8.300 15l-2.500-2.700h-5z" />
        </svg>
      </button>
      <span className="mr-1 ml-2 h-10 w-px bg-[#4a5560]" />
    </div>
  </div>
);

const App = () => {
  return (
    <div className="relative flex h-screen flex-col overflow-hidden bg-white font-['Open_Sans','Noto_Sans',sans-serif] text-[11px] text-black">
      <TitleBar />
      <Ribbon />
      <AddressBar />
      <div className="flex min-h-0 grow">
        <Sidebar />
        <FileList />
        <ScrollBar before="h-[245px]" thumb="h-[60px]" />
      </div>
      <StatusBar />
      <Taskbar />
      <Watermark />
    </div>
  );
};

export default App;
